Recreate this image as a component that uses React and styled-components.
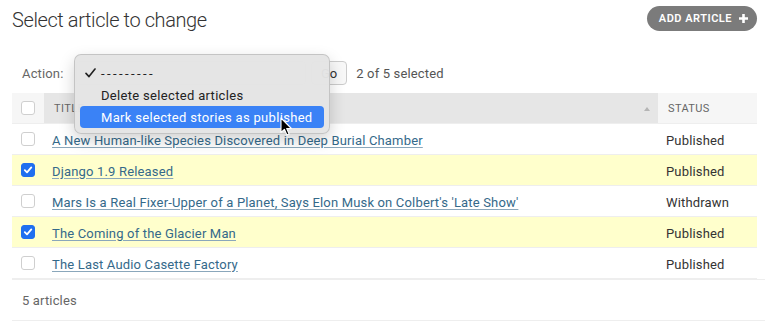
import React from "react";
import styled, { createGlobalStyle } from "styled-components";

const GlobalStyle = createGlobalStyle`
  body {
    margin: 0;
    background: #fff;
    font-family: Roboto, "Liberation Sans", sans-serif;
    color: #333;
  }
`;

const Page = styled.div`
  padding: 0 8px 0 12px;
  width: 745px;
`;

const TopBar = styled.div`
  display: flex;
  justify-content: space-between;
  align-items: flex-start;
  height: 38px;
`;

const Title = styled.h1`
  margin: 8px 0 0;
  font-size: 20px;
  line-height: 24px;
  font-weight: 300;
  letter-spacing: -0.4px;
  color: #333;
`;

const AddButton = styled.a`
  margin-top: 6px;
  display: flex;
  align-items: center;
  gap: 6px;
  height: 25px;
  padding: 0 8px 0 12px;
  border-radius: 13px;
  background: #7b7b7b;
  color: #fff;
  font-size: 11px;
  font-weight: 600;
  letter-spacing: 0.5px;
  text-decoration: none;
`;

const Actions = styled.div`
  position: relative;
  margin-top: 17px;
  height: 36px;
  display: flex;
  align-items: center;
  padding-left: 10px;
  font-size: 13px;
  letter-spacing: 0.15px;
  color: #666;
`;

const Label = styled.span`
  width: 54px;
`;

const SelectBox = styled.div`
  width: 228px;
  height: 22px;
  border: 1px solid #ccc;
  border-radius: 4px;
  margin-right: 5px;
`;

const GoButton = styled.button`
  height: 24px;
  padding: 0 9px;
  border: 1px solid #ccc;
  border-radius: 4px;
  background: #f8f8f8;
  font-family: inherit;
  font-size: 13px;
  color: #333;
`;

const Counter = styled.span`
  margin-left: 9px;
  color: #555;
`;

const Menu = styled.ul`
  position: absolute;
  left: 62px;
  top: -1px;
  width: 244px;
  margin: 0;
  padding: 7px 5px 5px;
  list-style: none;
  background: rgba(228, 228, 228, 0.97);
  border: 1px solid rgba(0, 0, 0, 0.14);
  border-radius: 7px;
  box-shadow: 0 6px 16px rgba(0, 0, 0, 0.18);
  z-index: 5;
`;

const MenuItem = styled.li`
  position: relative;
  height: 22px;
  line-height: 23px;
  padding-left: 21px;
  border-radius: 4px;
  font-size: 13px;
  letter-spacing: 0.32px;
  color: ${(p) => (p.$active ? "#fff" : "#222")};
  background: ${(p) => (p.$active ? "#3a82f6" : "transparent")};
`;

const Dashes = styled.span`
  letter-spacing: 2.4px;
`;

const Check = styled.svg`
  position: absolute;
  left: 5px;
  top: 6px;
`;

const Cursor = styled.svg`
  position: absolute;
  left: 268px;
  top: 62px;
  z-index: 6;
`;

const Table = styled.div`
  margin-top: 2px;
  display: grid;
  grid-template-columns: 32px 1fr 99px;
`;

const HeadCell = styled.div`
  height: 31px;
  box-sizing: border-box;
  display: flex;
  align-items: center;
  justify-content: ${(p) => (p.$center ? "center" : "space-between")};
  padding: ${(p) => (p.$center ? "0" : "1px 8px 0 10px")};
  background: ${(p) => (p.$sorted ? "#e6e6e6" : "#f6f6f6")};
  border-bottom: 1px solid #eee;
  font-size: 11px;
  letter-spacing: 0.4px;
  text-transform: uppercase;
  color: #666;
`;

const SortArrow = styled.span`
  width: 0;
  height: 0;
  border-left: 3.5px solid transparent;
  border-right: 3.5px solid transparent;
  border-bottom: 4px solid #b5b5b5;
`;

const Cell = styled.div`
  height: 31px;
  box-sizing: border-box;
  display: flex;
  align-items: center;
  justify-content: ${(p) => (p.$center ? "center" : "flex-start")};
  padding: ${(p) => (p.$center ? "0" : "2px 8px 0")};
  background: ${(p) => (p.$selected ? "#ffffcc" : "#fff")};
  border-bottom: 1px solid #eee;
  font-size: 13px;
  letter-spacing: 0.17px;
  color: #333;
  white-space: nowrap;
`;

const Link = styled.a`
  color: #34698a;
  text-decoration: underline;
  text-decoration-color: #8aa7bb;
  text-underline-offset: 2px;
`;

const Box = styled.span`
  width: 14px;
  height: 14px;
  box-sizing: border-box;
  border-radius: 3px;
  display: flex;
  align-items: center;
  justify-content: center;
  border: 1px solid ${(p) => (p.$checked ? "#1f6ff0" : "#cfcfcf")};
  background: ${(p) => (p.$checked ? "#1f6ff0" : "#fff")};
`;

const Paginator = styled.div`
  margin-right: -8px;
  height: 40px;
  display: flex;
  align-items: center;
  padding-left: 10px;
  border-top: 1px solid #eee;
  border-bottom: 1px solid #eee;
  font-size: 13px;
  letter-spacing: 0.15px;
  color: #666;
`;

const articles = [
  { title: "A New Human-like Species Discovered in Deep Burial Chamber", status: "Published", selected: false },
  { title: "Django 1.9 Released", status: "Published", selected: true },
  { title: "Mars Is a Real Fixer-Upper of a Planet, Says Elon Musk on Colbert's 'Late Show'", status: "Withdrawn", selected: false },
  { title: "The Coming of the Glacier Man", status: "Published", selected: true },
  { title: "The Last Audio Casette Factory", status: "Published", selected: false },
];

const Checkbox = ({ checked }) => (
  <Box $checked={checked}>
    {checked && (
      <svg width="10" height="10" viewBox="0 0 10 10">
        <path d="M1.8 5.2 L4 7.4 L8.3 2.4" fill="none" stroke="#fff" strokeWidth="1.8" strokeLinecap="round" strokeLinejoin="round" />
      </svg>
    )}
  </Box>
);

const App = () => {
  return (
    <Page>
      <GlobalStyle />
      <TopBar>
        <Title>Select article to change</Title>
        <AddButton href="#">
          ADD ARTICLE
          <svg width="11" height="11" viewBox="0 0 11 11">
            <path d="M5.5 1 V10 M1 5.5 H10" stroke="#fff" strokeWidth="2.6" />
          </svg>
        </AddButton>
      </TopBar>

      <Actions>
        <Label>Action:</Label>
        <SelectBox />
        <GoButton>Go</GoButton>
        <Counter>2 of 5 selected</Counter>
        <Menu>
          <MenuItem>
            <Check width="11" height="10" viewBox="0 0 11 10">
              <path d="M1 5.4 L4 8.6 L10 1" fill="none" stroke="#222" strokeWidth="1.6" strokeLinecap="round" strokeLinejoin="round" />
            </Check>
            <Dashes>---------</Dashes>
          </MenuItem>
          <MenuItem>Delete selected articles</MenuItem>
          <MenuItem $active>Mark selected stories as published</MenuItem>
        </Menu>
        <Cursor width="13" height="19" viewBox="0 0 13 19">
          <path d="M1 1 L1 15.5 L4.4 12.3 L6.9 18 L9.1 17 L6.7 11.5 L11.4 11.5 Z" fill="#000" stroke="#fff" strokeWidth="1.1" strokeLinejoin="round" />
        </Cursor>
      </Actions>

      <Table>
        <HeadCell $center>
          <Checkbox checked={false} />
        </HeadCell>
        <HeadCell $sorted>
          Title
          <SortArrow />
        </HeadCell>
        <HeadCell>Status</HeadCell>

        {articles.map((item, index) => (
          <React.Fragment key={index}>
            <Cell $center $selected={item.selected}>
              <Checkbox checked={item.selected} />
            </Cell>
            <Cell $selected={item.selected}>
              <Link href="#">{item.title}</Link>
            </Cell>
            <Cell $selected={item.selected}>{item.status}</Cell>
          </React.Fragment>
        ))}
      </Table>

      <Paginator>5 articles</Paginator>
    </Page>
  );
};

export default App;
